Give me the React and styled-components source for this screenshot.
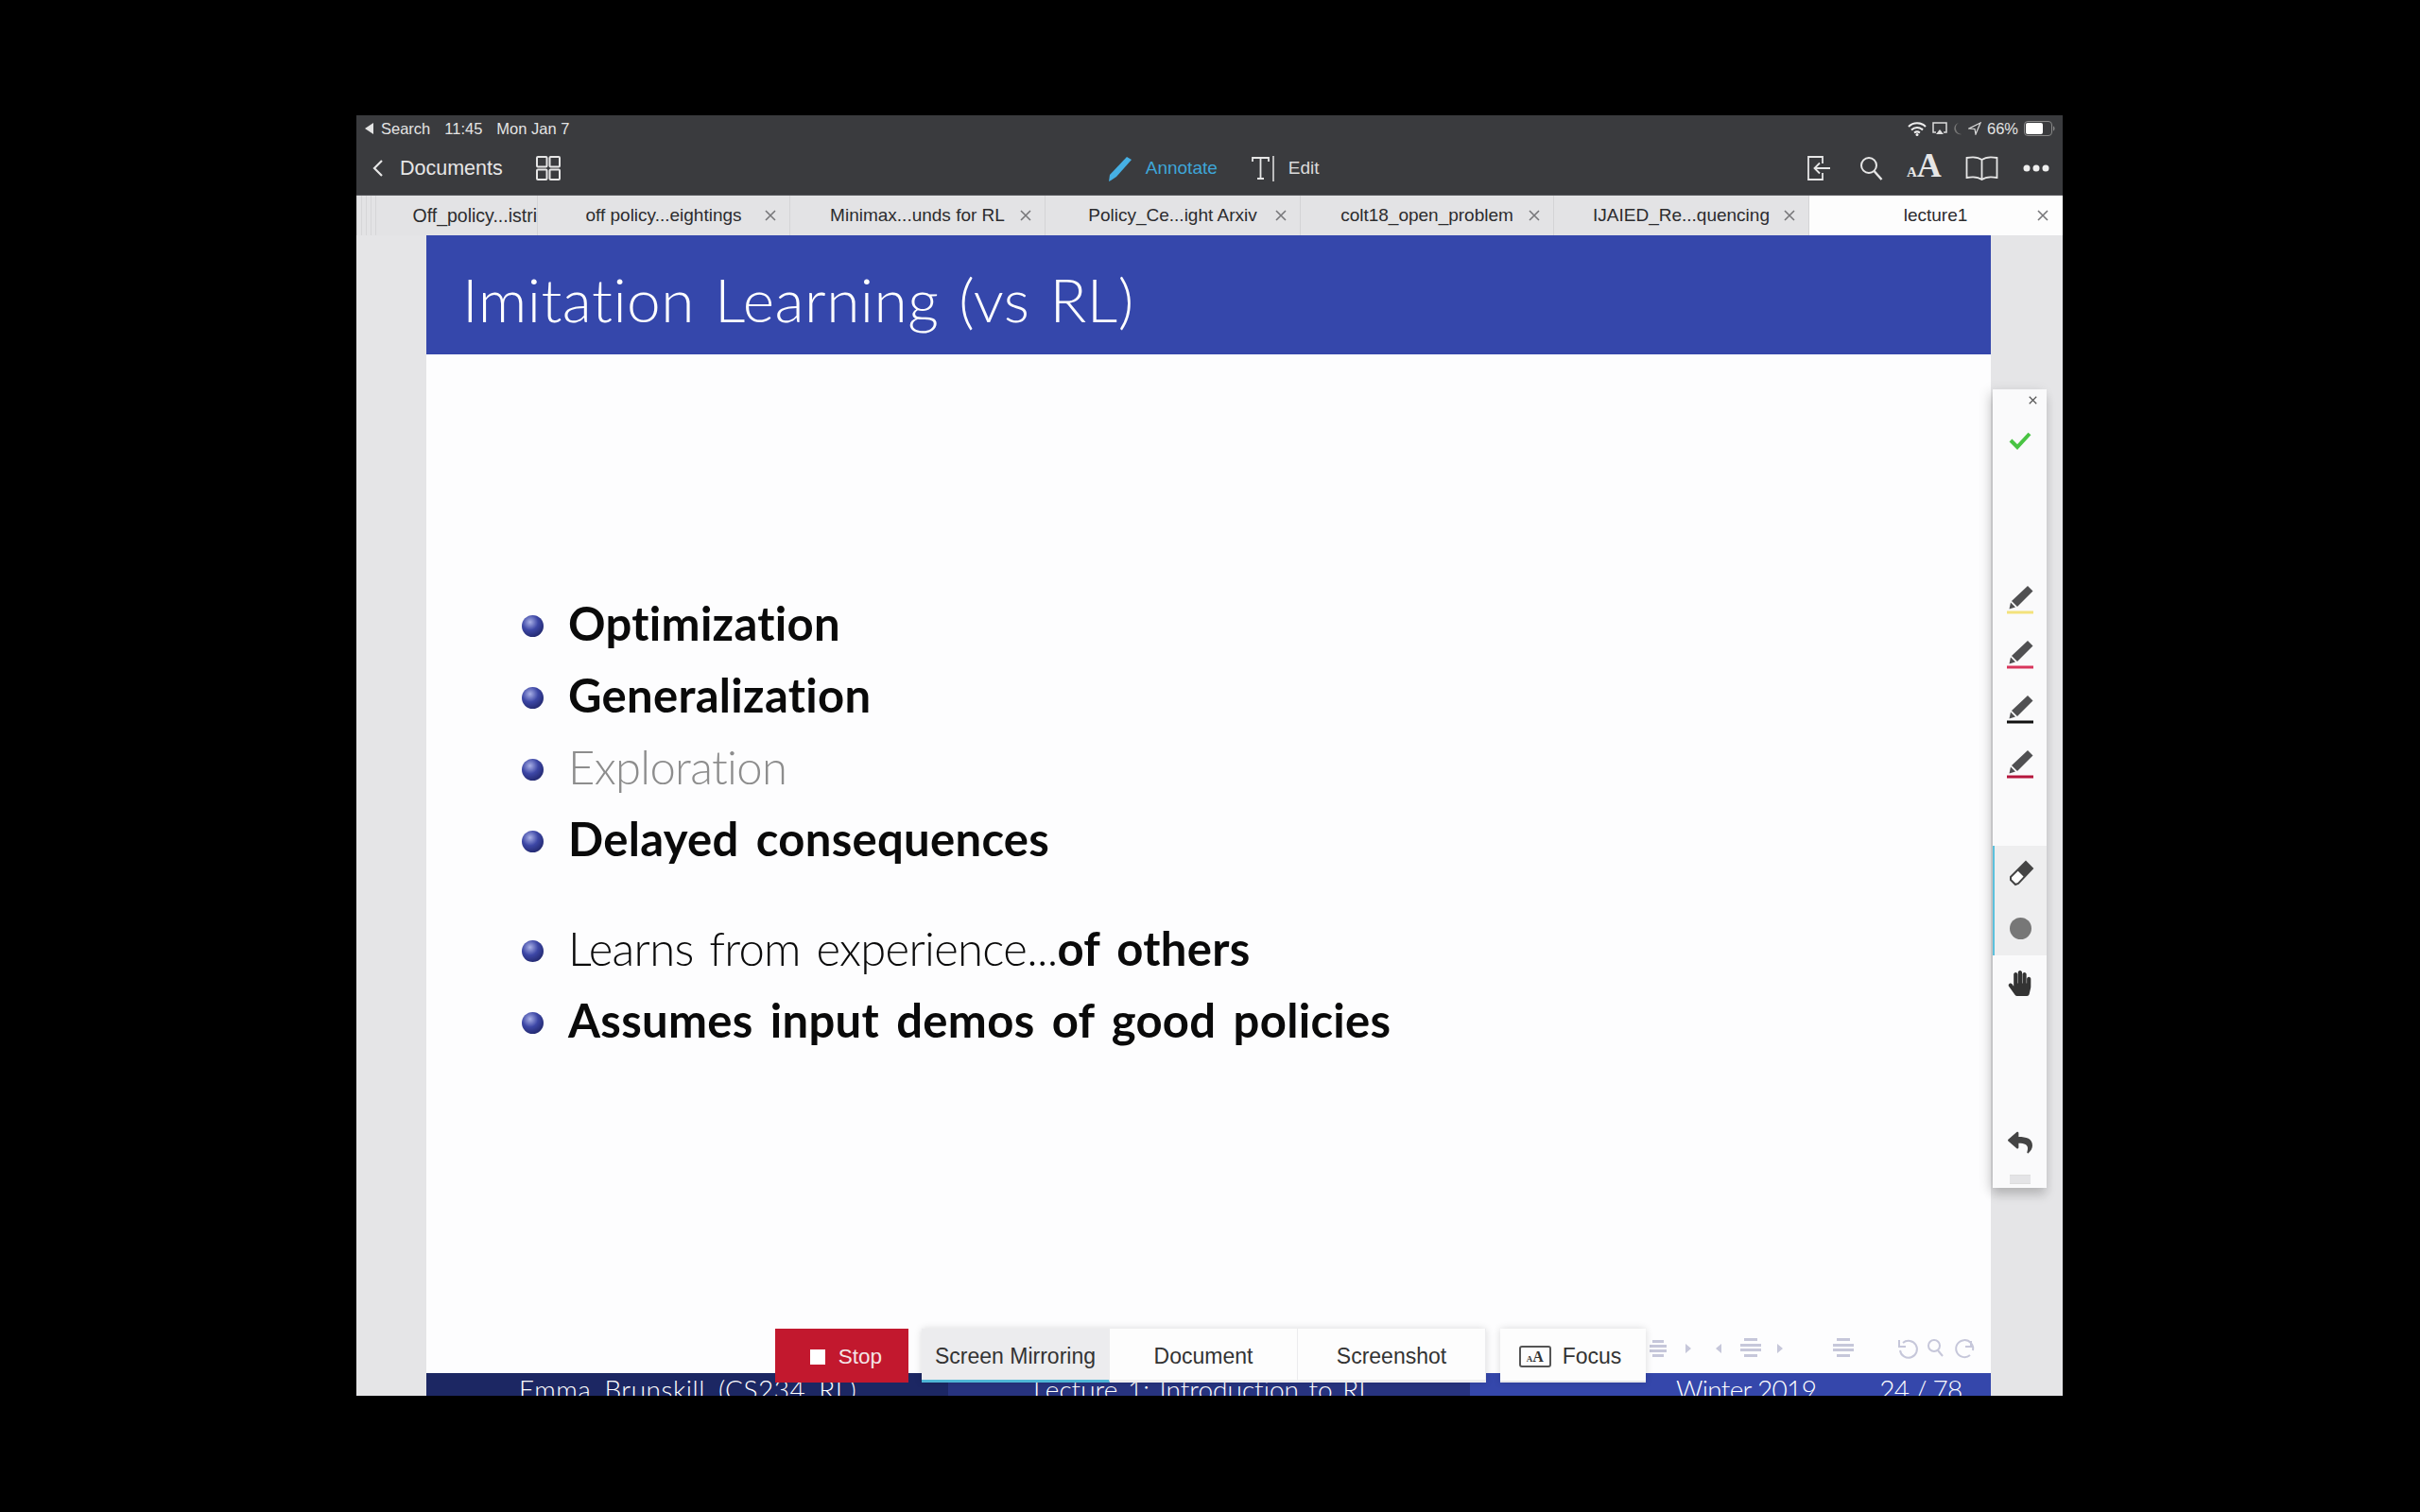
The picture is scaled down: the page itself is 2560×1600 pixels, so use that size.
import React from "react";
import styled, { createGlobalStyle } from "styled-components";
import { FaHandPaper, FaReply } from "react-icons/fa";

const Global = createGlobalStyle`
  html, body { margin: 0; padding: 0; background: #000; }
  body { font-family: "Liberation Sans", Arial, sans-serif; }
`;
const Page = styled.div`
  width: 2560px; height: 1600px; background: #000; box-sizing: border-box; padding: 122px 0 0 377px; overflow: hidden;
`;
const Screen = styled.div`
  position: relative; width: 1805px; height: 1355px; display: flex; flex-direction: column; overflow: hidden; background: #e4e4e6;
`;
const StatusBar = styled.div`
  height: 28px; flex: none; background: #3a3b3e; display: flex; align-items: center; padding: 0 7px 0 9px; color: #e4e4e4; font-size: 16.5px;
`;
const StatusLeft = styled.div`display: flex; align-items: center; gap: 15px;`;
const StatusRight = styled.div`margin-left: auto; display: flex; align-items: center; gap: 6px;`;
const BackCaret = styled.span`
  width: 0; height: 0; border-style: solid; border-width: 6px 9px 6px 0; border-color: transparent #e4e4e4 transparent transparent; margin-right: -7px;
`;
const NavBar = styled.div`
  height: 57px; flex: none; background: #3a3b3e; display: flex; align-items: center; color: #e8e8e8; position: relative; border-bottom: 1px solid #55565a; box-sizing: border-box;
`;
const NavLeft = styled.div`display: flex; align-items: center; padding-left: 17px;`;
const DocLabel = styled.span`font-size: 21.5px; margin: 0 35px 0 17px; color: #e6e6e6;`;
const NavCenter = styled.div`display: flex; align-items: center; margin-left: 579px;`;
const NavLabel = styled.span`font-size: 19px; color: ${p => p.$c || "#dcdcdc"}; margin: 0 ${p => p.$mr || 0}px 0 14px;`;
const NavRight = styled.div`margin-left: auto; display: flex; align-items: center; padding-right: 14px;`;
const NavIcon = styled.span`display: flex; margin-left: ${p => p.$ml}px;`;
const AaIcon = styled.span`
  display: flex; align-items: baseline; margin-left: 25px; width: 40px; font-family: "Liberation Serif", serif; font-weight: 700; font-size: 36px; line-height: 36px; color: #e6e6e6;
`;
const AaSmall = styled.span`font-size: 15px;`;
const TabBar = styled.div`height: 42px; flex: none; display: flex; background: #e3e3e5;`;
const Tab = styled.div`
  width: ${p => p.$w}px; box-sizing: border-box; display: grid; grid-template-columns: 1fr auto 1fr; align-items: center;
  font-size: 19px; color: #2c2c2e; background: ${p => p.$active ? "#fdfdfd" : "#e3e3e5"};
  border-right: 1px solid ${p => p.$active ? "transparent" : "#d4d4d6"};
  white-space: nowrap;
`;
const FirstTab = styled.div`
  width: 192px; box-sizing: border-box; display: flex; align-items: center; justify-content: flex-end; font-size: 19.5px; color: #2c2c2e; border-right: 1px solid #d4d4d6;
  background: repeating-linear-gradient(90deg, #d6d6d8 0 1px, #e3e3e5 1px 5px) 0 0 / 24px 100% no-repeat, #e3e3e5;
`;
const TabText = styled.span`grid-column: 2;`;
const TabClose = styled.span`grid-column: 3; justify-self: end; display: flex; padding-right: 14px;`;
const Main = styled.div`flex: 1; display: flex; min-height: 0;`;
const Gutter = styled.div`width: ${p => p.$w}px; flex: none; background: #e5e5e7;`;
const Slide = styled.div`flex: 1; display: flex; flex-direction: column; background: #fdfdfe; min-width: 0;`;
const TitleBar = styled.div`
  height: 126px; flex: none; background: #3547ab; color: #fff; display: flex; align-items: center; padding-left: 38px; box-sizing: border-box;
`;
const Title = styled.h1`
  margin: 9px 0 0; font-family: Lato, sans-serif; font-weight: 300; font-size: 64px; letter-spacing: .5px; word-spacing: 3px; font-variant-ligatures: none;
`;
const Content = styled.div`flex: 1; display: flex; flex-direction: column; padding-top: 246px; min-height: 0;`;
const List = styled.ul`list-style: none; margin: 0 0 ${p => p.$mb || 0}px; padding: 0 0 0 101px;`;
const Item = styled.li`
  height: 76px; display: flex; align-items: center; gap: 26px; font-family: Lato, sans-serif; font-size: 49px; font-variant-ligatures: none;
  font-weight: ${p => p.$bold ? 700 : 300}; color: ${p => p.$dim ? "#8d8d8d" : "#0a0a0a"};
  letter-spacing: ${p => p.$bold ? 0.3 : -0.7}px; word-spacing: ${p => p.$bold ? 6 : 4}px; white-space: nowrap;
`;
const Bullet = styled.span`
  width: 23px; height: 23px; flex: none; border-radius: 50%; margin-top: 7px;
  background: radial-gradient(circle at 38% 32%, #a9b0e6 0%, #3d47a6 40%, #1a1f5e 90%);
`;
const Strong = styled.b`font-weight: 700; letter-spacing: .3px; word-spacing: 6px;`;
const NavSymbols = styled.svg`margin: auto 14px 10px auto; flex: none; display: block;`;
const Footer = styled.div`
  height: 24px; flex: none; display: flex; font-family: Lato, sans-serif; font-weight: 300; font-size: 28px; color: #fff; overflow: hidden; font-variant-ligatures: none;
`;
const FootCell = styled.div`
  width: ${p => p.$w}px; flex: ${p => p.$grow ? 1 : "none"}; background: ${p => p.$bg}; box-sizing: border-box; padding-left: ${p => p.$pl}px; line-height: 35px;
  letter-spacing: ${p => p.$ls || 0}px; word-spacing: ${p => p.$ws}px; white-space: nowrap; display: flex; gap: 67px;
`;
const Dock = styled.div`
  position: absolute; left: 443px; bottom: 14px; display: flex; align-items: stretch; height: 57px;
`;
const StopBtn = styled.div`
  width: 141px; background: #c2182e; color: #f4e4e6; display: flex; align-items: center; justify-content: center; gap: 14px; font-size: 22.5px; margin-right: 14px; padding: 3px 0 0 9px; box-sizing: border-box;
`;
const StopSquare = styled.span`width: 16px; height: 16px; background: #fff;`;
const DockGroup = styled.div`display: flex; box-shadow: 0 0 8px rgba(0,0,0,.14); margin-right: 15px;`;
const DockItem = styled.div`
  width: ${p => p.$w}px; box-sizing: border-box; display: flex; align-items: center; justify-content: center; font-size: 23px; color: #333; padding-top: 5px;
  background: ${p => p.$on ? "#ececee" : "#fdfdfd"}; border-right: 1px solid #ececee;
  border-bottom: 3px solid ${p => p.$on ? "#4fb6d6" : "#eeeeef"};
`;
const FocusBtn = styled.div`
  width: 154px; box-sizing: border-box; background: #fdfdfd; display: flex; align-items: center; justify-content: center; gap: 12px; font-size: 23px; color: #333; box-shadow: 0 0 8px rgba(0,0,0,.14); border-bottom: 2px solid #e8e8ea; padding: 4px 6px 0 0;
`;
const FocusIcon = styled.span`
  width: 34px; height: 23px; border: 2px solid #555; border-radius: 3px; display: flex; align-items: baseline; justify-content: center; font-family: "Liberation Serif", serif; font-size: 16px; font-weight: 700; line-height: 20px; color: #333; box-sizing: border-box;
`;
const SmallA = styled.span`font-size: 9px;`;
const Tools = styled.div`
  position: absolute; left: 1731px; top: 290px; width: 57px; height: 845px; background: #fafafb; display: flex; flex-direction: column; align-items: center;
  box-shadow: -4px 2px 12px rgba(0,0,0,.12), 0 8px 10px rgba(0,0,0,.14);
`;
const ToolClose = styled.span`position: absolute; right: 10px; top: 7px; display: flex;`;
const ToolSlot = styled.div`height: ${p => p.$h || 58}px; width: 100%; flex: none; display: flex; align-items: center; justify-content: center; margin-top: ${p => p.$mt || 0}px;`;
const Active = styled.div`
  width: 100%; flex: none; background: #eeeeef; border-left: 2px solid #5cc0dc; box-sizing: border-box; margin: 57px 0 0; display: flex; flex-direction: column;
`;
const Dot = styled.span`width: 23px; height: 23px; border-radius: 50%; background: #777;`;
const Handle = styled.div`
  width: 22px; height: 8px; margin-top: 16px; flex: none; border-top: 1px solid #ddd; border-bottom: 1px solid #ddd; background: #e4e4e6;
`;

const Svg = ({ w, h, vb, children, ...r }) => <svg width={w} height={h} viewBox={vb || `0 0 ${w} ${h}`} fill="none" {...r}>{children}</svg>;

const X = ({ c = "#77777a", s = 12 }) => (
  <Svg w={s} h={s} vb="0 0 12 12"><path d="M1 1l10 10M11 1L1 11" stroke={c} strokeWidth="1.6" /></Svg>
);
const PenLine = ({ c }) => (
  <Svg w={30} h={32} vb="0 0 30 32">
    <path d="M23 1l5.500 5.500L12 23l-6-6z" fill="#505052" />
    <path d="M5 18.500l5 5L3.500 25.500z" fill="#505052" />
    <rect x="1" y="27.500" width="28" height="3" fill={c} />
  </Svg>
);

const tabs = [
  ["off policy...eightings", 267],
  ["Minimax...unds for RL", 270],
  ["Policy_Ce...ight Arxiv", 270],
  ["colt18_open_problem", 268],
  ["IJAIED_Re...quencing", 270],
];

export default function App() {
  return (
    <Page>
      <Global />
      <Screen>
        <StatusBar>
          <StatusLeft>
            <BackCaret />
            <span>Search</span><span>11:45</span><span>Mon Jan 7</span>
          </StatusLeft>
          <StatusRight>
            <Svg w={20} h={16} vb="0 0 20 16">
              <path d="M1 6c5-5 13-5 18 0M4 9.500c3.500-3.500 8.500-3.500 12 0M7 12.500c2-1.500 4-1.500 6 0" stroke="#eee" strokeWidth="2" />
              <circle cx="10" cy="14.500" r="1.500" fill="#eee" />
            </Svg>
            <Svg w={16} h={14} vb="0 0 16 14">
              <path d="M4 11H1V1h14v10h-3" stroke="#ddd" strokeWidth="1.500" /><path d="M8 8l4 5H4z" fill="#ddd" />
            </Svg>
            <Svg w={10} h={14} vb="0 0 10 14"><path d="M6 1a6 6 0 0 0 3 12A6.500 6.500 0 0 1 6 1z" fill="#777" /></Svg>
            <Svg w={14} h={14} vb="0 0 14 14"><path d="M13 1L1 7l6 .5L8 13z" stroke="#ddd" strokeWidth="1.200" /></Svg>
            <span>66%</span>
            <Svg w={34} h={16} vb="0 0 34 16">
              <rect x=".5" y=".5" width="29" height="15" rx="3.500" stroke="#888" />
              <rect x="2" y="2" width="18" height="12" rx="2" fill="#fff" />
              <path d="M31 5.500c2 .5 2 4.500 0 5z" fill="#888" />
            </Svg>
          </StatusRight>
        </StatusBar>
        <NavBar>
          <NavLeft>
            <Svg w={12} h={20} vb="0 0 12 20"><path d="M10 2L2 10l8 8" stroke="#e6e6e6" strokeWidth="2.200" /></Svg>
            <DocLabel>Documents</DocLabel>
            <Svg w={26} h={26} vb="0 0 26 26">
              <g stroke="#e6e6e6" strokeWidth="2">
                <rect x="1" y="1" width="10.500" height="10.500" rx="1" /><rect x="14.500" y="1" width="10.500" height="10.500" rx="1" />
                <rect x="1" y="14.500" width="10.500" height="10.500" rx="1" /><rect x="14.500" y="14.500" width="10.500" height="10.500" rx="1" />
              </g>
            </Svg>
          </NavLeft>
          <NavCenter>
            <Svg w={26} h={27} vb="0 0 26 27"><path d="M20 1l5 3L9 22l-6 4-2 1 1-7z" fill="#46b0e4" /></Svg>
            <NavLabel $c="#3ea6d8" $mr={36}>Annotate</NavLabel>
            <Svg w={25} h={27} vb="0 0 25 27">
              <path d="M1 6V2h17v4M9.500 2v22M6 24h7" stroke="#e6e6e6" strokeWidth="1.800" /><path d="M23 0v27" stroke="#e6e6e6" strokeWidth="1.500" />
            </Svg>
            <NavLabel>Edit</NavLabel>
          </NavCenter>
          <NavRight>
            <NavIcon $ml={0}>
              <Svg w={26} h={28} vb="0 0 26 28">
                <path d="M17 9V2H2v24h15v-7" stroke="#e6e6e6" strokeWidth="1.800" />
                <path d="M25 14H9M14 8.500L8.500 14l5.500 5.500" stroke="#e6e6e6" strokeWidth="1.800" />
              </Svg>
            </NavIcon>
            <NavIcon $ml={30}>
              <Svg w={25} h={26} vb="0 0 25 26">
                <circle cx="10" cy="10" r="8" stroke="#e6e6e6" strokeWidth="2" /><path d="M15.500 16l8 9" stroke="#e6e6e6" strokeWidth="2.500" />
              </Svg>
            </NavIcon>
            <AaIcon><AaSmall>A</AaSmall>A</AaIcon>
            <NavIcon $ml={22}>
              <Svg w={35} h={26} vb="0 0 34 26">
                <path d="M17 4C13 1 6 1 1 2v21c5-1 12-1 16 2 4-3 11-3 16-2V2c-5-1-12-1-16 2zM17 4v21" stroke="#e6e6e6" strokeWidth="1.800" />
              </Svg>
            </NavIcon>
            <NavIcon $ml={26}>
              <Svg w={28} h={8} vb="0 0 28 8">
                <circle cx="4" cy="4" r="3.500" fill="#eee" /><circle cx="14" cy="4" r="3.500" fill="#eee" /><circle cx="24" cy="4" r="3.500" fill="#eee" />
              </Svg>
            </NavIcon>
          </NavRight>
        </NavBar>
        <TabBar>
          <FirstTab>Off_policy...istri</FirstTab>
          {tabs.map(([t, w]) => (
            <Tab key={t} $w={w}><TabText>{t}</TabText><TabClose><X /></TabClose></Tab>
          ))}
          <Tab $w={268} $active><TabText>lecture1</TabText><TabClose><X /></TabClose></Tab>
        </TabBar>
        <Main>
          <Gutter $w={74} />
          <Slide>
            <TitleBar><Title>Imitation Learning (vs RL)</Title></TitleBar>
            <Content>
              <List $mb={40}>
                <Item $bold><Bullet />Optimization</Item>
                <Item $bold><Bullet />Generalization</Item>
                <Item $dim><Bullet />Exploration</Item>
                <Item $bold><Bullet />Delayed consequences</Item>
              </List>
              <List>
                <Item><Bullet /><span>Learns from experience...<Strong>of others</Strong></span></Item>
                <Item $bold><Bullet />Assumes input demos of good policies</Item>
              </List>
              <NavSymbols width="347" height="30" viewBox="0 0 347 30" fill="none">
                <g fill="#c6c7da">
                  <rect x="3" y="5" width="12" height="3" /><rect x="0" y="10" width="18" height="3" /><rect x="0" y="15" width="18" height="3" /><rect x="3" y="20" width="12" height="3" />
                  <path d="M38 9l6 5-6 5zM70 14l6-5v10zM135 9l6 5-6 5z" />
                  <rect x="100" y="3" width="14" height="3" /><rect x="96" y="9" width="22" height="3" /><rect x="96" y="14" width="22" height="3" /><rect x="100" y="20" width="14" height="3" />
                  <rect x="198" y="3" width="14" height="3" /><rect x="194" y="9" width="22" height="3" /><rect x="194" y="14" width="22" height="3" /><rect x="198" y="20" width="14" height="3" />
                </g>
                <g stroke="#c6c7da" strokeWidth="2">
                  <path d="M268 8a9 9 0 1 1-3 8M264 5v7h7" />
                  <circle cx="301" cy="11" r="6" /><path d="M305 16l5 6" />
                  <path d="M342 16a9 9 0 1 0-3 5M340 6v6h-6" />
                </g>
              </NavSymbols>
            </Content>
            <Footer>
              <FootCell $w={552} $bg="#1c2763" $pl={98} $ls={.5} $ws={6}>Emma Brunskill (CS234 RL)</FootCell>
              <FootCell $w={552} $bg="#27337f" $pl={90} $ws={3}>Lecture 1: Introduction to RL</FootCell>
              <FootCell $grow $bg="#3547ab" $pl={218} $ls={-.7} $ws={0}><span>Winter 2019</span><span>24 / 78</span></FootCell>
            </Footer>
          </Slide>
          <Gutter $w={76} />
        </Main>
        <Dock>
          <StopBtn><StopSquare />Stop</StopBtn>
          <DockGroup>
            <DockItem $w={199} $on>Screen Mirroring</DockItem>
            <DockItem $w={199}>Document</DockItem>
            <DockItem $w={199}>Screenshot</DockItem>
          </DockGroup>
          <FocusBtn>
            <FocusIcon><SmallA>A</SmallA>A</FocusIcon>
            Focus
          </FocusBtn>
        </Dock>
        <Tools>
          <ToolClose><X c="#555" s={9} /></ToolClose>
          <ToolSlot $h={36} $mt={36}>
            <Svg w={24} h={20} vb="0 0 24 20"><path d="M2 10l7 7L22 3" stroke="#49c443" strokeWidth="4" /></Svg>
          </ToolSlot>
          <ToolSlot $mt={122}><PenLine c="#f3e27c" /></ToolSlot>
          <ToolSlot><PenLine c="#d8365c" /></ToolSlot>
          <ToolSlot><PenLine c="#111" /></ToolSlot>
          <ToolSlot><PenLine c="#b5163c" /></ToolSlot>
          <Active>
            <ToolSlot>
              <Svg w={28} h={28} vb="0 0 28 28">
                <path d="M19 2l7 7L11 25l-3 1-5-5 0-3z" fill="#fff" stroke="#444" strokeWidth="2" />
                <path d="M19 2l7 7-9 9-7-7z" fill="#444" />
              </Svg>
            </ToolSlot>
            <ToolSlot><Dot /></ToolSlot>
          </Active>
          <ToolSlot><FaHandPaper size={27} color="#333" /></ToolSlot>
          <ToolSlot $mt={122} $h={36}><FaReply size={26} color="#444" /></ToolSlot>
          <Handle />
        </Tools>
      </Screen>
    </Page>
  );
}
